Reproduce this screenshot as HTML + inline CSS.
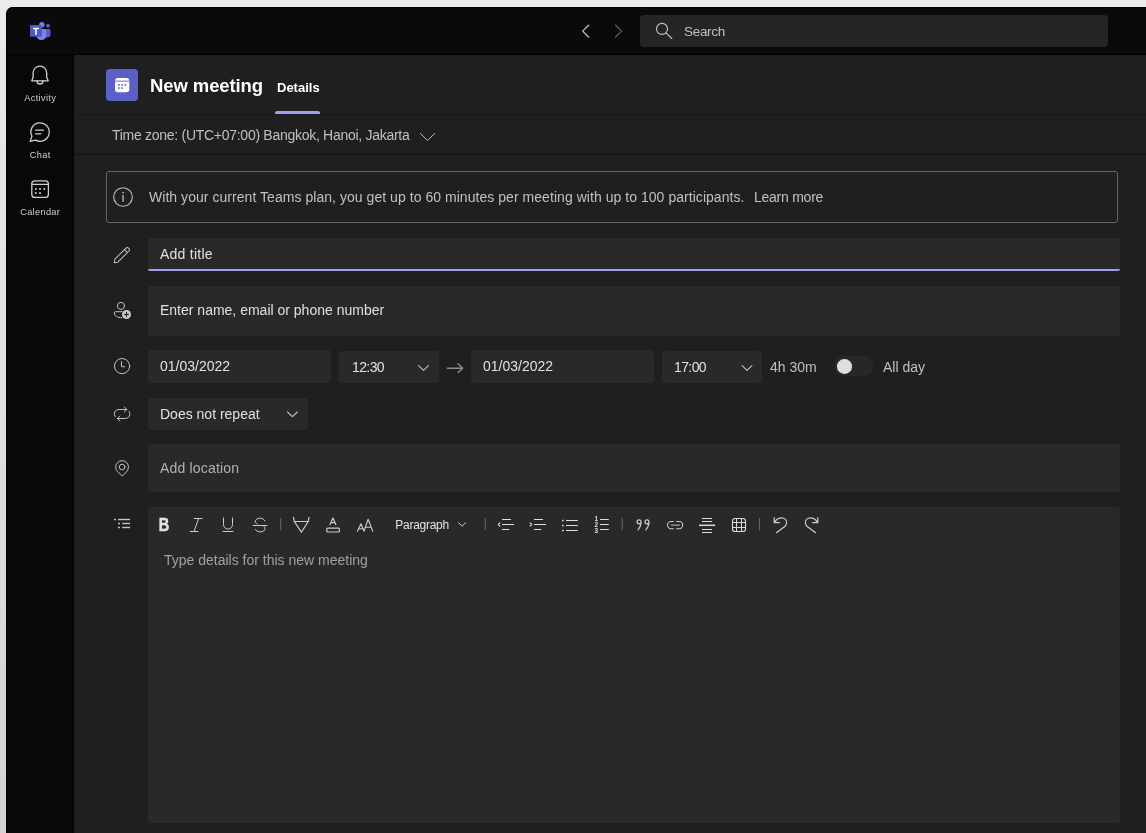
<!DOCTYPE html>
<html lang="en">
<head>
<meta charset="utf-8">
<title>New meeting</title>
<style>
*{box-sizing:border-box;margin:0;padding:0}
html,body{width:1146px;height:833px;overflow:hidden;background:linear-gradient(#ebebeb,#d3d3d3);font-family:"Liberation Sans",sans-serif;}
body{position:relative}
.abs{position:absolute}
#win{position:absolute;left:6px;top:7px;width:1140px;height:826px;background:#0a0a0a;border-top-left-radius:7px;overflow:hidden;box-shadow:inset 1px 1px 0 #000}
#main{position:absolute;left:68px;top:48px;width:1072px;height:778px;background:#1f1f1f}
/* everything below is positioned in page coordinates inside #page */
#page{position:absolute;left:0;top:0;width:1146px;height:833px;will-change:transform}
.t{position:absolute;white-space:nowrap;color:#d6d6d6;font-size:14px;line-height:16px}
.box{position:absolute;background:#292929;border-radius:3px}
svg{position:absolute;overflow:visible}
.ic{fill:none;stroke:#d0d0d0;stroke-width:1.1;stroke-linecap:round;stroke-linejoin:round}
.navt{font-size:9.200px;line-height:12px;letter-spacing:.350px;color:#d0d0d0;text-align:center;width:68px;left:6.200px}
</style>
</head>
<body>
<div id="win"><div style="position:absolute;left:0;top:47px;width:1140px;height:1px;background:#000"></div><div style="position:absolute;left:0;top:48px;width:68px;height:778px;background:#080808;border-right:1px solid #020202;border-left:1px solid #000"></div><div id="main"></div></div>
<div id="page">

<!-- ===== top bar ===== -->
<div class="box" id="search" style="left:640px;top:15px;width:468px;height:32px;background:#252525;border-radius:4px"></div>
<div class="t" style="left:684px;top:23.800px;font-size:13.500px;letter-spacing:-.300px;color:#c0c0c0">Search</div>

<!-- ===== sidebar labels ===== -->
<div class="t navt" style="top:92px">Activity</div>
<div class="t navt" style="top:149px">Chat</div>
<div class="t navt" style="top:206px">Calendar</div>

<!-- ===== header ===== -->
<div class="abs" style="left:106px;top:69px;width:32px;height:32px;border-radius:4px;background:#5b5fc7"></div>
<div class="t" style="left:150px;top:75px;font-size:18.500px;line-height:22px;font-weight:bold;letter-spacing:-.100px;color:#fff">New meeting</div>
<div class="t" style="left:277px;top:79.500px;font-size:13px;line-height:16px;font-weight:bold;color:#fff">Details</div>
<div class="abs" style="left:275px;top:111px;width:45px;height:3px;background:#a0a4ee;border-radius:2px 2px 0 0"></div>
<div class="abs" style="left:74px;top:114px;width:1072px;height:1px;background:#181818"></div>

<!-- ===== timezone ===== -->
<div class="t" style="left:112px;top:127px;font-size:14px;letter-spacing:-.280px;color:#c0c0c0">Time zone: (UTC+07:00) Bangkok, Hanoi, Jakarta</div>
<div class="abs" style="left:74px;top:154px;width:1072px;height:1px;background:#131313"></div>

<!-- ===== info banner ===== -->
<div class="abs" style="left:106px;top:171px;width:1012px;height:52px;border:1px solid #646464;border-radius:3px"></div>
<div class="t" style="left:149px;top:189px;letter-spacing:.045px;color:#c0c0c0">With your current Teams plan, you get up to 60 minutes per meeting with up to 100 participants.</div>
<div class="t" style="left:754px;top:189px;letter-spacing:-.250px;color:#c0c0c0">Learn more</div>

<!-- ===== title ===== -->
<div class="box" style="left:148px;top:238px;width:972px;height:33px;border-radius:3px 3px 2px 2px;border-bottom:2px solid #9da1ec"></div>
<div class="t" style="left:160px;top:246px;letter-spacing:.250px;color:#e0e0e0">Add title</div>

<!-- ===== attendees ===== -->
<div class="box" style="left:148px;top:286px;width:972px;height:50px"></div>
<div class="t" style="left:160px;top:302px;color:#e0e0e0">Enter name, email or phone number</div>

<!-- ===== date row ===== -->
<div class="box" style="left:148px;top:350px;width:183px;height:33px"></div>
<div class="t" style="left:160px;top:358px;color:#e0e0e0">01/03/2022</div>
<div class="box" style="left:339px;top:351px;width:100px;height:32px"></div>
<div class="t" style="left:352px;top:359px;letter-spacing:-.600px;color:#e0e0e0">12:30</div>
<div class="box" style="left:471px;top:350px;width:183px;height:33px"></div>
<div class="t" style="left:483px;top:358px;color:#e0e0e0">01/03/2022</div>
<div class="box" style="left:662px;top:351px;width:100px;height:32px"></div>
<div class="t" style="left:674px;top:359px;letter-spacing:-.600px;color:#e0e0e0">17:00</div>
<div class="t" style="left:770px;top:359px;color:#c0c0c0">4h 30m</div>
<div class="abs" style="left:834px;top:356px;width:40px;height:20px;border-radius:10px;background:#272727"></div>
<div class="abs" style="left:837px;top:359px;width:14.600px;height:14.600px;border-radius:7.300px;background:#dedede"></div>
<div class="t" style="left:883px;top:359px;color:#c0c0c0">All day</div>

<!-- ===== repeat ===== -->
<div class="box" style="left:148px;top:398px;width:160px;height:32px"></div>
<div class="t" style="left:160px;top:406px;color:#e0e0e0">Does not repeat</div>

<!-- ===== location ===== -->
<div class="box" style="left:148px;top:444px;width:972px;height:48px"></div>
<div class="t" style="left:160px;top:460px;letter-spacing:.180px;color:#b0b0b0">Add location</div>

<!-- ===== editor ===== -->
<div class="box" style="left:148px;top:507px;width:972px;height:316px"></div>
<div class="t" style="left:164px;top:552px;color:#a0a0a0">Type details for this new meeting</div>
<div class="t" style="left:395.300px;top:517.500px;font-size:12px;line-height:14px;letter-spacing:-.280px;color:#e2e2e2">Paragraph</div>


<!-- ===== icon overlay (page coordinates) ===== -->
<svg id="icons" width="1146" height="833" viewBox="0 0 1146 833" style="left:0;top:0">
<!-- Teams logo -->
<g id="logo">
<circle cx="48" cy="25.8" r="2" fill="#5059c9"/>
<path d="M44.5 29h5.2a.8.8 0 0 1 .8.8v4.4a3.3 3.3 0 0 1-3.3 3.3h-.2a3.3 3.3 0 0 1-3.3-3.3z" fill="#5059c9"/>
<circle cx="41.900" cy="24.700" r="2.700" fill="#7b83eb"/>
<path d="M37 29h8.400a.9.900 0 0 1 .9.900v5.300a4.900 4.900 0 0 1-4.900 4.900h0a4.900 4.900 0 0 1-4.900-4.900v-5.300a.9.900 0 0 1 .5-.900z" fill="#7b83eb"/>
<rect x="30" y="25" width="12" height="11.800" rx="1" fill="#5059c9"/>
<path d="M33 27.700h6v1.500h-2.200v5.600h-1.600v-5.600H33z" fill="#fff"/>
</g>
<!-- nav arrows -->
<path class="ic" d="M588.600 25.200l-6 5.900 6 5.900" style="stroke:#bdbdbd;stroke-width:1.300"/>
<path class="ic" d="M615.600 25.200l6 5.900-6 5.900" style="stroke:#5c5c5c;stroke-width:1.300"/>
<!-- search icon -->
<g class="ic" style="stroke:#c2c2c2;stroke-width:1.100"><circle cx="662" cy="28.900" r="5.500"/><path d="M666 32.900l5.800 5.600"/></g>
<!-- bell -->
<g class="ic" style="stroke:#cfcfcf;stroke-width:1.300"><path d="M31.800 80.800h16.400l-1.500-3.600v-4.300a6.800 6.800 0 0 0-13.600 0v4.300z"/><path d="M37 81a3 3 0 0 0 6 0"/></g>
<!-- chat -->
<g class="ic" style="stroke:#cfcfcf;stroke-width:1.300" transform="translate(-.600 .200)"><path d="M30.800 141.200l1.700-5.100a9.200 9.200 0 1 1 3.700 3.800z"/><path d="M36.200 130h7.800M36.200 133.600h5.200"/></g>
<!-- calendar nav -->
<g class="ic" style="stroke:#cfcfcf;stroke-width:1.300"><rect x="31.800" y="180.800" width="16.600" height="16.600" rx="3"/><path d="M31.800 184.300h16.600"/></g>
<g fill="#cfcfcf"><circle cx="35.800" cy="188.900" r="1"/><circle cx="40" cy="188.900" r="1"/><circle cx="44.300" cy="188.900" r="1"/><circle cx="35.800" cy="192.900" r="1"/><circle cx="40" cy="192.900" r="1"/></g>
<!-- header calendar glyph -->
<rect x="115" y="78" width="14.300" height="14.200" rx="3" fill="#fff"/>
<rect x="115" y="80.700" width="14.300" height="0.800" fill="#4a4eb5"/>
<g fill="#6b6fb8"><rect x="118" y="84.100" width="1.700" height="1.700"/><rect x="121.200" y="84.100" width="1.700" height="1.700"/><rect x="124.400" y="84.100" width="1.700" height="1.700"/><rect x="118" y="87.200" width="1.700" height="1.700"/><rect x="121.200" y="87.200" width="1.700" height="1.700"/></g>
<!-- timezone chevron -->
<path class="ic" d="M420.300 133.400l7.200 7.200 7.200-7.200" style="stroke:#c2c2c2;stroke-width:1"/>
<!-- info -->
<g class="ic" style="stroke:#c2c2c2;stroke-width:1.100"><circle cx="123" cy="197" r="9.300"/></g>
<rect x="122.400" y="195" width="1.300" height="6.800" fill="#c2c2c2"/><rect x="122.300" y="191.900" width="1.500" height="1.500" fill="#c2c2c2"/>
<!-- pencil -->
<g class="ic" style="stroke:#c2c2c2;stroke-width:1" transform="rotate(-45 122 255)"><path d="M114 252.900h15.400a2.100 2.100 0 0 1 0 4.200h-15.400l-3-2.100z"/><path d="M127.600 252.900v4.200"/></g>
<!-- people add -->
<g class="ic" style="stroke:#c2c2c2;stroke-width:1"><circle cx="121" cy="305.900" r="3.600"/><path d="M122 311.700h-6.500a1.200 1.200 0 0 0-1.200 1.200c0 3.200 3 4.800 7.600 4.800"/></g>
<circle cx="126.500" cy="314.500" r="4.500" fill="#c8c8c8"/><path d="M124.100 314.500h4.800M126.500 312.100v4.800" stroke="#1f1f1f" stroke-width="1.100" fill="none"/>
<!-- clock -->
<g class="ic" style="stroke:#c2c2c2;stroke-width:1"><circle cx="122.100" cy="366.100" r="7.600"/><path d="M121.500 361.600v5.100h3.200"/></g>
<!-- repeat -->
<g class="ic" style="stroke:#c2c2c2;stroke-width:1"><path d="M115.100 416.600A4.500 4.500 0 0 1 118.800 409.500H126.800"/><path d="M124.300 407l2.500 2.500-2.500 2.500"/><path d="M129.100 411.400A4.500 4.500 0 0 1 125.400 418.500H117.400"/><path d="M119.900 416l-2.500 2.500 2.500 2.500"/></g>
<!-- location -->
<g class="ic" style="stroke:#c2c2c2;stroke-width:1"><path d="M122.100 475.800l-4.550-4.200a6.400 6.400 0 1 1 9.100 0z"/><circle cx="122.100" cy="467" r="2.800"/></g>
<!-- list (description) -->
<g fill="#c4c4c4"><rect x="114" y="518.800" width="2" height="1.400"/><rect x="118.100" y="518.800" width="12" height="1.400"/><rect x="118" y="522.800" width="2" height="1.400"/><rect x="122.200" y="522.800" width="7.900" height="1.400"/><rect x="118" y="526.800" width="2" height="1.400"/><rect x="122.200" y="526.800" width="7.900" height="1.400"/></g>
<!-- dropdown chevrons -->
<g class="ic" style="stroke:#c2c2c2;stroke-width:1.100"><path d="M418.600 365.600l4.900 4.700 4.900-4.700"/><path d="M742.100 365.600l4.900 4.700 4.900-4.700"/><path d="M287.500 412l4.900 4.700 4.900-4.700"/></g>
<!-- arrow between dates -->
<path class="ic" d="M447.300 368.200h15.400M458 363.800l4.700 4.400-4.700 4.400" style="stroke:#8c8c8c;stroke-width:1.350"/>
<!-- toolbar -->
<g class="ic" style="stroke:#cdcdcd;stroke-width:1">
<!-- italic -->
<path d="M194.200 518.500h7.800M190.200 531.500h7.800M198.600 518.500l-4.600 13"/>
<!-- underline -->
<path d="M223.500 518v6.600a4.500 4.500 0 0 0 9 0v-6.600M223 531.500h10"/>
<!-- strike -->
<path d="M264.900 520.900c-.900-1.700-2.600-2.700-4.600-2.700-2.900 0-5.100 1.400-5.100 3.400 0 1 .700 1.700 2 2.200M262.800 525.600c1.400.500 2.200 1.400 2.200 2.700 0 2.200-2 3.600-4.700 3.600-2.300 0-4.100-.900-5.100-2.500M253.200 525.500h13.800"/>
<!-- separators -->
<path d="M280.700 518.400v11.600M485.300 518.400v11.200M622.200 518.400v11.200M759.400 518.400v11.600" style="stroke:#6a6a6a"/>
<!-- highlighter -->
<path d="M293.500 517.300L294.300 521.500L301.400 532.200L308.200 521.500L309 517.300M294.300 521.500H308.200" style="stroke-width:1.200"/>
<!-- font colour -->
<path d="M329.900 524.700L332.900 518L335.900 524.700M330.900 522.600h4" style="stroke-width:1.200"/><rect x="326.800" y="528.200" width="12.600" height="3.800" rx="1" style="stroke-width:1.200"/>
<!-- font size -->
<path d="M357.400 531.200L361 523.800L364 531.200M358.600 528.800h4.600M364 531.200L368.100 519.300L372.800 531.200M365.600 527.200h5.400" style="stroke-width:1.100"/>
<!-- paragraph chevron -->
<path d="M458.600 522.800l3.500 3.400 3.500-3.400"/>
<!-- outdent -->
<path d="M502 519.500h9M502 524.500h12M502 529.500h7.200" style="stroke:#dcdcdc;stroke-width:1.100;stroke-linecap:butt"/><path d="M499.800 523l-1.500 1.500 1.500 1.500" style="stroke-width:1.200"/>
<!-- indent -->
<path d="M534 519.500h9M534 524.500h12M534 529.500h7.100" style="stroke:#dcdcdc;stroke-width:1.100;stroke-linecap:butt"/><path d="M530.200 523l1.500 1.500-1.500 1.500" style="stroke-width:1.200"/>
<!-- bullets -->
<path d="M566 520.500h11.800M566 525.500h11.800M566 530.500h11.800" style="stroke:#dcdcdc;stroke-width:1.100;stroke-linecap:butt"/>
<!-- numbered -->
<path d="M600 519.500h8.800M600 524.500h8.800M600 529.500h8.800" style="stroke:#dcdcdc;stroke-width:1.100;stroke-linecap:butt"/>
<!-- quote -->
<path d="M641.100 521.800a2 2 0 1 0-2 2c1.100 0 2-.900 2-2 0 3.200-1 5.800-3.100 8M649 521.800a2 2 0 1 0-2 2c1.100 0 2-.900 2-2 0 3.200-1 5.800-3.100 8" style="stroke-width:1.200"/>
<!-- link -->
<path d="M673.400 521.500h-2.300a3.600 3.600 0 0 0 0 7.200h2.300M676.600 521.500h2.500a3.600 3.600 0 0 1 0 7.200h-2.500" style="stroke-width:1.050"/><path d="M671.200 525.100h8.200" style="stroke:#a2a2a2;stroke-width:1.200"/>
<!-- hr / align -->
<path d="M702 518.500h10.100M702 521.500h10.100M702 529.500h10.100M702 532.500h10.100" style="stroke:#dcdcdc;stroke-linecap:butt"/><path d="M699 525.300h16.100" style="stroke:#dcdcdc;stroke-width:1.500;stroke-linecap:butt"/>
<!-- table -->
<rect x="732.500" y="518.500" width="13" height="13" rx="2.600" style="stroke:#d8d8d8;stroke-width:1.100"/><path d="M736.500 518.500v13M741.500 518.500v13M732.500 522.500h13M732.500 527.500h13" style="stroke:#d8d8d8"/>
<!-- undo -->
<path d="M774.200 517.600v5.100h5.100M774.500 522.400c1.500-2.900 4.300-4.600 7.200-4.600 2.800 0 4.900 2.100 4.900 4.700 0 1.600-.6 2.900-1.800 4l-8.400 6.200" style="stroke-width:1.200"/>
<!-- redo -->
<path d="M817.800 517.600v5.100h-5.100M817.500 522.400c-1.500-2.900-4.300-4.600-7.200-4.600-2.800 0-4.900 2.100-4.900 4.700 0 1.600.6 2.900 1.800 4l8.400 6.200" style="stroke-width:1.200"/>
</g>
<g fill="#dcdcdc"><rect x="562" y="519.800" width="1.600" height="1.500"/><rect x="562" y="524.800" width="1.600" height="1.500"/><rect x="562" y="529.800" width="1.600" height="1.500"/></g>
<g fill="#e0e0e0" font-family="Liberation Sans, sans-serif" font-size="6.400" font-weight="bold"><text x="594.500" y="521.400">1</text><text x="594.500" y="527">2</text><text x="594.500" y="532.700">3</text></g>
<text x="158.800" y="531.200" fill="#e2e2e2" stroke="#e2e2e2" stroke-width=".500" font-family="Liberation Sans, sans-serif" font-size="17.500" font-weight="bold" textLength="10.500" lengthAdjust="spacingAndGlyphs">B</text>

</svg>
</div>
</body>
</html>
